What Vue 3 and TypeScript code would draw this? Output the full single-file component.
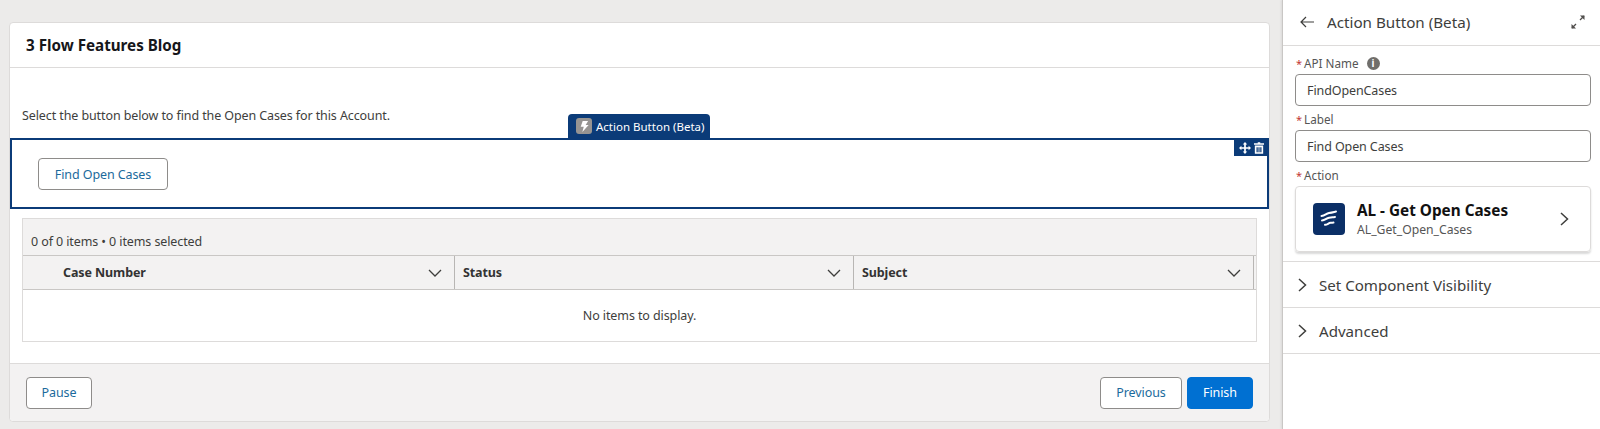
<script setup lang="ts">
const columns: string[] = ['Case Number', 'Status', 'Subject']
const chev = 'M1 1l6 6 6-6'
</script>

<template>
  <div class="page">
    <main class="canvas">
      <section class="card">
        <header class="card-head">3 Flow Features Blog</header>
        <div class="card-body">
          <p class="intro">Select the button below to find the Open Cases for this Account.</p>
          <div class="selected">
            <div class="tab">
              <span class="tab-icon">
                <svg width="9" height="11" viewBox="0 0 10 12"><path d="M3 0h6L6.3 4.400H9.600L2.600 12l1.600-5.600H.8z" fill="#fff" /></svg>
              </span>
              Action Button (Beta)
            </div>
            <div class="tools">
              <svg width="12" height="12" viewBox="0 0 14 14" fill="#fff"><path d="M7 0l2.600 2.800H8v3.200h3.200V4.400L14 7l-2.800 2.600V8H8v3.200h1.600L7 14l-2.600-2.800H6V8H2.800v1.600L0 7l2.800-2.600V6H6V2.800H4.400z" /></svg>
              <svg width="10" height="12" viewBox="0 0 12 14" fill="#fff"><path d="M4.500 0h3v1.400H12v1.600H0V1.400h4.500zM1 4h10v10H1zm2 2v6h1.500V6zm2.300 0v6h1.400V6zm2.200 0v6H9V6z" /></svg>
            </div>
            <button class="btn">Find Open Cases</button>
          </div>
          <div class="table">
            <div class="table-info">0 of 0 items • 0 items selected</div>
            <div class="table-head">
              <div v-for="c in columns" :key="c" class="col">
                <span>{{ c }}</span>
                <svg width="14" height="8" viewBox="0 0 14 8" fill="none" stroke="#3e3e3c" stroke-width="1.300"><path :d="chev" /></svg>
              </div>
            </div>
            <div class="table-empty">No items to display.</div>
          </div>
        </div>
        <footer class="card-foot">
          <button class="btn foot-btn pause">Pause</button>
          <div class="foot-right">
            <button class="btn foot-btn previous">Previous</button>
            <button class="btn foot-btn finish">Finish</button>
          </div>
        </footer>
      </section>
    </main>

    <aside class="panel">
      <div class="panel-head">
        <svg width="14" height="12" viewBox="0 0 14 12" fill="none" stroke="#3e3e3c" stroke-width="1.200"><path d="M14 6H1M6 1 1 6l5 5" /></svg>
        <span class="panel-title">Action Button (Beta)</span>
        <svg class="expand" width="14" height="14" viewBox="0 0 14 14" fill="none" stroke="#514f4d"><path d="M9 5l4-4" stroke-width="1.300" /><path d="M9 .5h4.500V5z" fill="#514f4d" stroke="none" /><path d="M5 9l-4 4" stroke-width="1.300" /><path d="M5 13.500H.5V9z" fill="#514f4d" stroke="none" /></svg>
      </div>
      <div class="fields">
        <label class="label"><i>*</i>API Name
          <span class="info">i</span>
        </label>
        <div class="input">FindOpenCases</div>
        <label class="label"><i>*</i>Label</label>
        <div class="input">Find Open Cases</div>
        <label class="label"><i>*</i>Action</label>
        <div class="action">
          <span class="action-icon">
            <svg width="20" height="20" viewBox="0 0 20 20" fill="none" stroke="#fff" stroke-width="2" stroke-linecap="round"><path d="M2.500 7C6 7 7 4.500 10 4s4-.8 7-1.500" /><path d="M3 11.500c3 0 4-2.200 7-2.700s3-.4 6-.8" /><path d="M6 15.800c2 .3 3.500-1.800 5.500-2s2 0 3-.2" /></svg>
          </span>
          <span class="action-text">
            <b>AL - Get Open Cases</b>
            <small>AL_Get_Open_Cases</small>
          </span>
          <svg width="9" height="14" viewBox="0 0 9 14" fill="none" stroke="#3e3e3c" stroke-width="1.500"><path d="M1 1l6.500 6L1 13" /></svg>
        </div>
      </div>
      <div class="section">
        <svg width="9" height="14" viewBox="0 0 9 14" fill="none" stroke="#3e3e3c" stroke-width="1.500"><path d="M1 1l6.500 6L1 13" /></svg>
        Set Component Visibility
      </div>
      <div class="section">
        <svg width="9" height="14" viewBox="0 0 9 14" fill="none" stroke="#3e3e3c" stroke-width="1.500"><path d="M1 1l6.500 6L1 13" /></svg>
        Advanced
      </div>
    </aside>
  </div>
</template>

<style>
html, body { margin: 0; background: #ecebea; }
</style>

<style scoped>
.page {
  display: flex;
  width: 1600px;
  height: 429px;
  overflow: hidden;
  background: #ecebea;
  font-family: "Noto Sans", "Open Sans", sans-serif;
  font-size: 12.500px;
  letter-spacing: -0.1px;
  color: #3e3e3c;
}
.canvas { flex: 1; padding: 22px 12px 7px 9px; min-width: 0; }
.card {
  height: 400px;
  box-sizing: border-box;
  display: flex;
  flex-direction: column;
  background: #fff;
  border: 1px solid #dddbda;
  border-radius: 4px;
}
.card-head {
  height: 45px;
  box-sizing: border-box;
  padding: 0 16px;
  display: flex;
  align-items: center;
  border-bottom: 1px solid #dddbda;
  font-size: 15.200px;
  letter-spacing: 0;
  font-weight: 700;
  color: #16161a;
}
.card-body { flex: 1; display: flex; flex-direction: column; }
.intro { margin: 39px 12px 13px; line-height: 18px; }
.selected {
  position: relative;
  height: 71px;
  box-sizing: border-box;
  border: 2px solid #0b3b78;
  padding: 18px 26px;
}
.tab {
  position: absolute;
  left: 556px;
  top: -26px;
  height: 24px;
  width: 142px;
  box-sizing: border-box;
  display: flex;
  align-items: center;
  gap: 4px;
  padding-left: 8px;
  background: #0b3b78;
  color: #fff;
  border-radius: 4px 4px 0 0;
  font-size: 11.500px;
  letter-spacing: 0;
  white-space: nowrap;
}
.tab-icon {
  width: 16px;
  height: 16px;
  border-radius: 3px;
  background: #969492;
  display: flex;
  align-items: center;
  justify-content: center;
}
.tools {
  position: absolute;
  right: -1px;
  top: -1px;
  width: 34px;
  height: 17px;
  background: #0b3b78;
  display: flex;
  align-items: center;
  justify-content: center;
  gap: 3px;
}
.btn {
  font: inherit;
  letter-spacing: inherit;
  height: 32px;
  padding: 0;
  background: #fff;
  border: 1px solid #8e8c8a;
  border-radius: 4px;
  color: #1b6a9c;
}
.selected .btn { width: 130px; }
.table {
  margin: 9px 12px 0;
  height: 124px;
  box-sizing: border-box;
  border: 1px solid #dddbda;
  display: flex;
  flex-direction: column;
}
.table-info {
  height: 37px;
  box-sizing: border-box;
  background: #f3f2f2;
  padding: 14px 8px 0;
  line-height: 18px;
  border-bottom: 1px solid #c9c7c5;
}
.table-head {
  height: 34px;
  box-sizing: border-box;
  display: grid;
  grid-template-columns: 432px 399px 400px;
  background: #f3f2f2;
  border-bottom: 1px solid #c9c7c5;
  font-weight: 700;
  color: #333;
}
.col {
  display: flex;
  align-items: center;
  justify-content: space-between;
  padding: 0 12px 0 8px;
  border-right: 1px solid #b8b6b4;
}
.col:first-child { padding-left: 40px; }
.table-empty {
  flex: 1;
  display: flex;
  align-items: center;
  justify-content: center;
}
.card-foot {
  height: 58px;
  box-sizing: border-box;
  margin-top: auto;
  display: flex;
  align-items: center;
  justify-content: space-between;
  padding: 0 16px;
  background: #f3f2f2;
  border-top: 1px solid #dddbda;
  border-radius: 0 0 4px 4px;
}
.foot-right { display: flex; gap: 5px; }
.pause { width: 66px; }
.previous { width: 82px; }
.finish { width: 66px; background: #0070d2; border-color: #0070d2; color: #fff; }
.panel {
  width: 318px;
  box-sizing: border-box;
  background: #fff;
  border-left: 1px solid #c9c7c5;
  box-shadow: -1px 0 2px rgba(0, 0, 0, 0.08);
  letter-spacing: 0;
}
.panel-head {
  height: 46px;
  box-sizing: border-box;
  display: flex;
  align-items: center;
  padding: 0 15px 2px 17px;
  border-bottom: 1px solid #dddbda;
}
.panel-title { margin-left: 13px; font-size: 15.200px; color: #3e3e3c; }
.expand { margin-left: auto; }
.fields { padding: 8px 9px 9px 12px; border-bottom: 1px solid #dddbda; }
.label {
  display: flex;
  align-items: center;
  height: 20px;
  box-sizing: border-box;
  padding-bottom: 2px;
  font-size: 11.700px;
  color: #555;
}
.label i { color: #c23934; font-style: normal; font-size: 11px; margin: 0 2px 0 1px; }
.info {
  width: 13px;
  height: 13px;
  margin-left: 8px;
  border-radius: 50%;
  background: #706e6b;
  color: #fff;
  font-size: 10px;
  font-weight: 700;
  display: flex;
  align-items: center;
  justify-content: center;
}
.input {
  height: 32px;
  box-sizing: border-box;
  display: flex;
  align-items: center;
  padding: 1px 11px 0;
  margin-bottom: 4px;
  border: 1px solid #8e8c8a;
  border-radius: 4px;
  font-size: 12.500px;
  letter-spacing: -0.1px;
  color: #3e3e3c;
}
.action {
  height: 66px;
  box-sizing: border-box;
  display: flex;
  align-items: center;
  padding: 0 21px 0 17px;
  border: 1px solid #dddbda;
  border-radius: 4px;
  box-shadow: 0 2px 2px rgba(0, 0, 0, 0.15);
}
.action-icon {
  width: 32px;
  height: 32px;
  border-radius: 4px;
  background: #0b2f66;
  display: flex;
  align-items: center;
  justify-content: center;
}
.action-text { flex: 1; margin-left: 12px; display: flex; flex-direction: column; }
.action-text b { font-size: 15.300px; line-height: 20px; color: #111; }
.action-text small { font-size: 12.200px; line-height: 19px; color: #555; }
.section {
  height: 46px;
  box-sizing: border-box;
  display: flex;
  align-items: center;
  gap: 12px;
  padding-left: 15px;
  border-bottom: 1px solid #dddbda;
  font-size: 15.100px;
  color: #3e3e3c;
}
</style>
